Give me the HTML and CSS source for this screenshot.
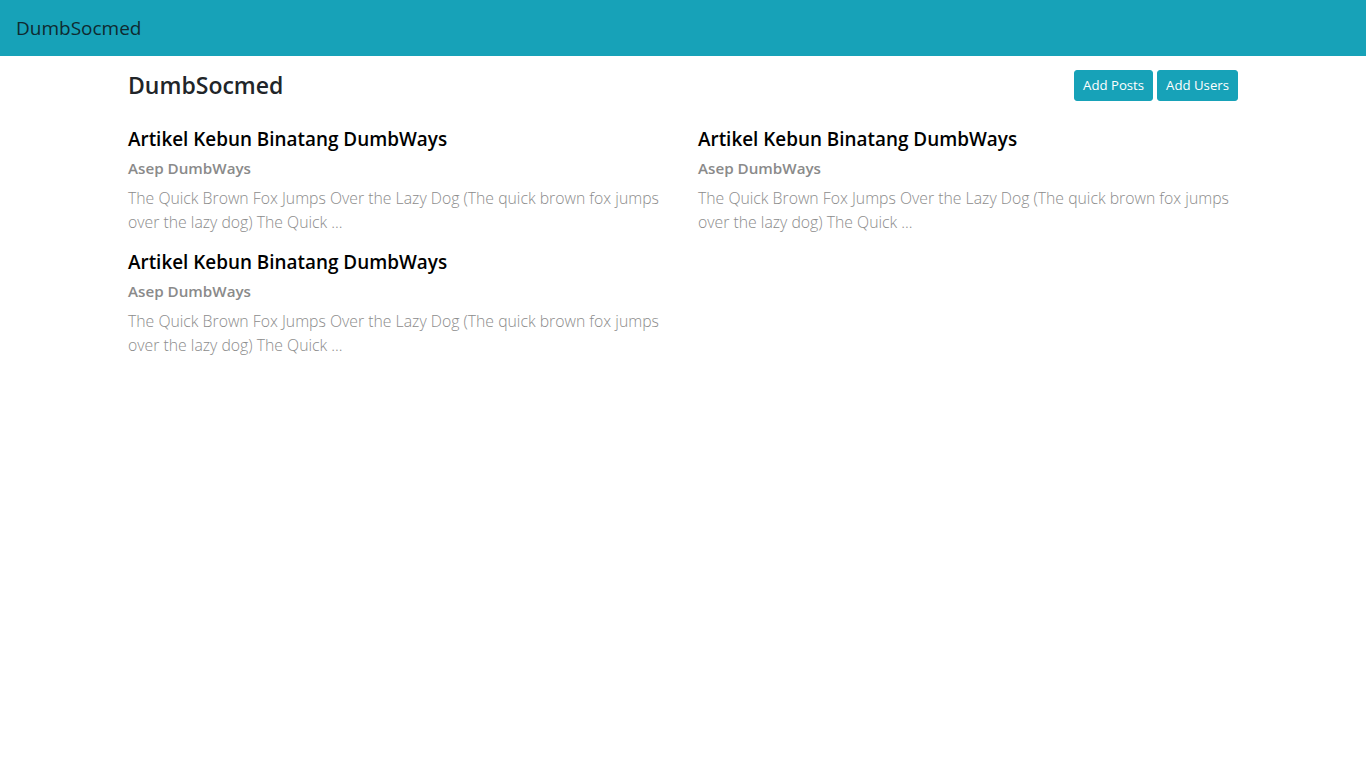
FILE: index.html
```html
<!DOCTYPE html>
<html lang="en">
<head>
<meta charset="utf-8">
<title>DumbSocmed</title>
<link rel="stylesheet" href="styles.css">
</head>
<body>
<nav class="navbar">
  <span class="brand">DumbSocmed</span>
</nav>
<main class="container">
  <div class="header">
    <h4 class="page-title">DumbSocmed</h4>
    <div class="actions">
      <button class="btn">Add Posts</button>
      <button class="btn">Add Users</button>
    </div>
  </div>
  <div class="posts">
    <article class="post">
      <h5 class="post-title">Artikel Kebun Binatang DumbWays</h5>
      <h6 class="post-author">Asep DumbWays</h6>
      <p class="post-body">The Quick Brown Fox Jumps Over the Lazy Dog (The quick brown fox jumps over the lazy dog) The Quick ...</p>
    </article>
    <article class="post">
      <h5 class="post-title">Artikel Kebun Binatang DumbWays</h5>
      <h6 class="post-author">Asep DumbWays</h6>
      <p class="post-body">The Quick Brown Fox Jumps Over the Lazy Dog (The quick brown fox jumps over the lazy dog) The Quick ...</p>
    </article>
    <article class="post">
      <h5 class="post-title">Artikel Kebun Binatang DumbWays</h5>
      <h6 class="post-author">Asep DumbWays</h6>
      <p class="post-body">The Quick Brown Fox Jumps Over the Lazy Dog (The quick brown fox jumps over the lazy dog) The Quick ...</p>
    </article>
  </div>
</main>
</body>
</html>
```

FILE: styles.css
```css
* { box-sizing: border-box; }
body {
  margin: 0;
  font-family: "Open Sans", "Noto Sans", sans-serif;
  color: #212529;
  background: #fff;
}
.navbar {
  height: 56px;
  background: #17a2b8;
  display: flex;
  align-items: center;
  padding: 0 16px;
}
.brand {
  font-size: 19px;
  color: #0f2a30;
}
.container {
  width: 1140px;
  margin: 0 auto;
  padding: 0 15px;
}
.header {
  display: flex;
  align-items: center;
  justify-content: space-between;
  padding-top: 14px;
}
.page-title {
  margin: 0;
  font-size: 23px;
  font-weight: 600;
  line-height: 31px;
}
.actions {
  display: flex;
  gap: 4px;
}
.btn {
  font-family: inherit;
  font-size: 13.2px;
  color: #fff;
  background: #17a2b8;
  border: 1px solid #17a2b8;
  border-radius: 3px;
  height: 31px;
  padding: 0 8px;
  line-height: 29px;
}
.posts {
  display: grid;
  grid-template-columns: 1fr 1fr;
  column-gap: 30px;
  margin-top: 26px;
  align-items: start;
}
.post-title {
  margin: 0 0 8px;
  font-size: 18.9px;
  font-weight: 600;
  line-height: 24px;
  color: #000;
}
.post-author {
  margin: 0 0 8px;
  font-size: 15.2px;
  font-weight: 600;
  line-height: 19px;
  color: #8a8a8a;
}
.post-body {
  margin: 0 0 16px;
  font-size: 15.8px;
  font-weight: 300;
  line-height: 24px;
  color: #8c8c8c;
}
```
